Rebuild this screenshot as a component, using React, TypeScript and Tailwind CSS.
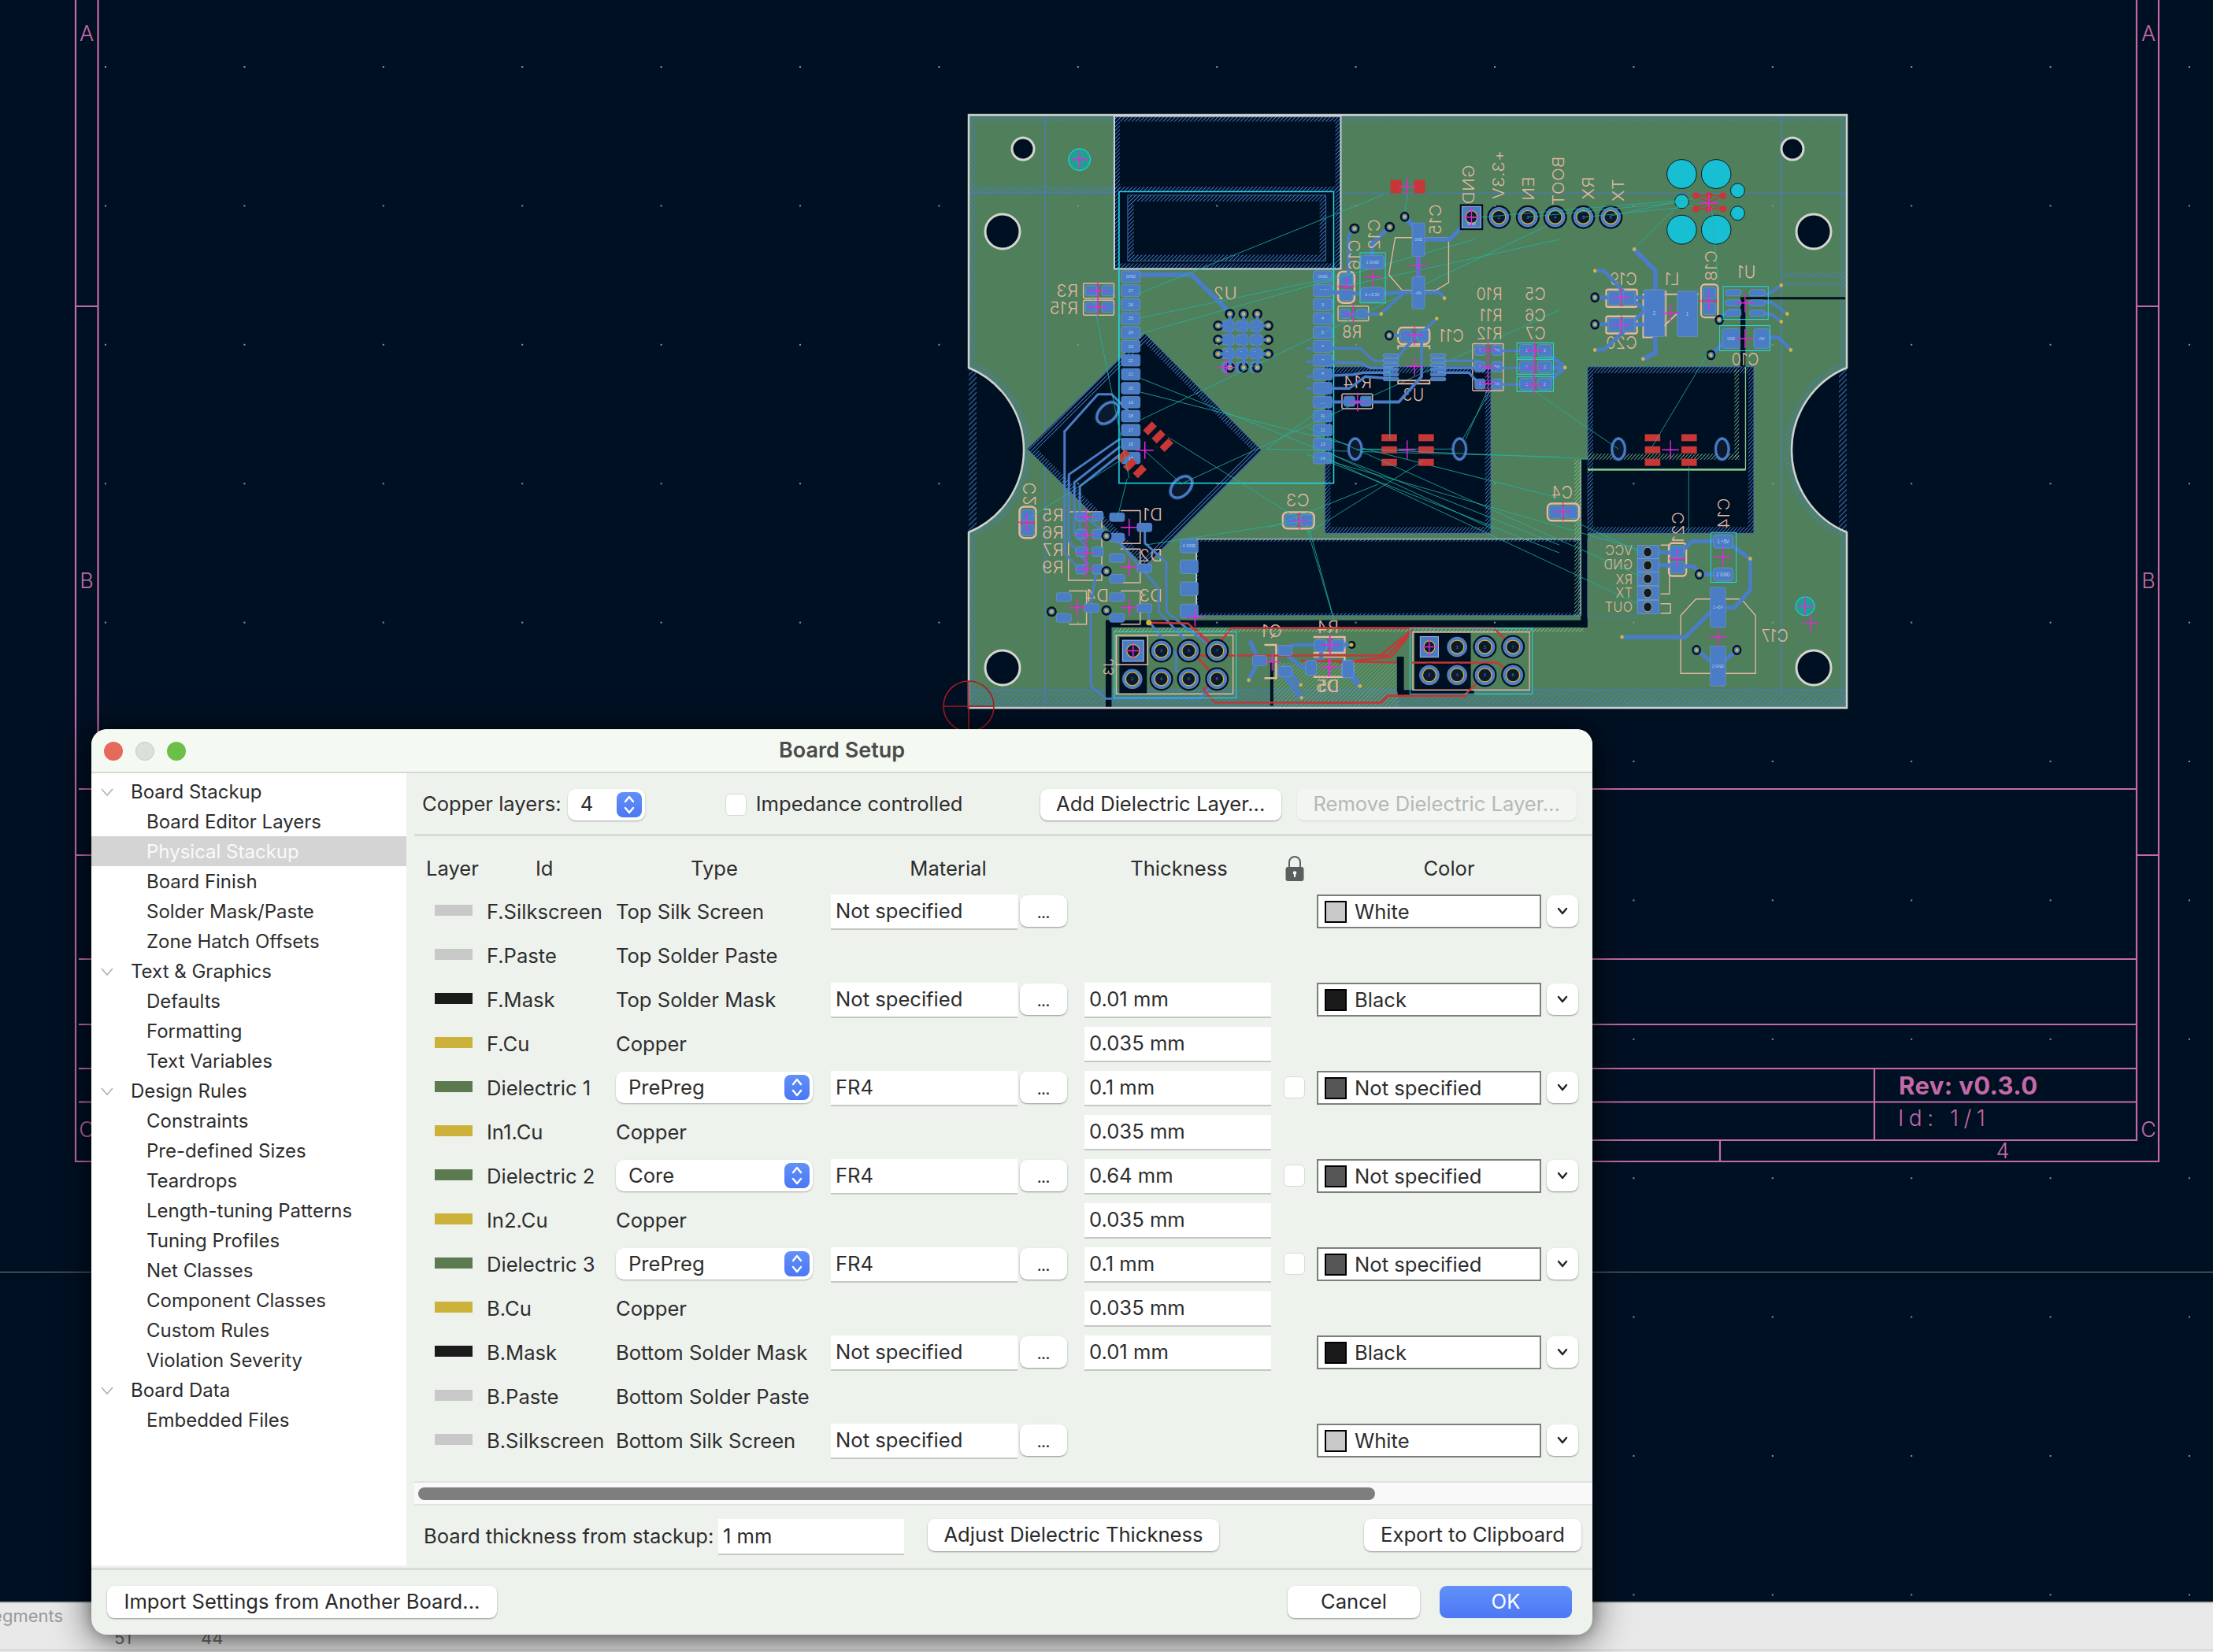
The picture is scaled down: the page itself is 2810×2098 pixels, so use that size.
import React from 'react';

const BLUE = '#4a7dc6';
const TEAL = '#22b5a6';
const SILK = '#e5b8a2';
const MAG = '#f020e0';
const CYAN = '#1fe0f0';
const DARK = '#001023';
const GREEN = '#4f7f5b';
const RED = '#c93636';
const PINK = '#c56aa6';

// two crops of the board were measured, each with its own scale
const Z1 = 'translate(1200 130) scale(0.4975 0.4975)';
const Z2 = 'translate(1660 130) scale(0.4464 0.4975)';

const Trace = ({ d, w = 8, c = BLUE }: { d: string; w?: number; c?: string }) => (
  <polyline points={d} fill="none" stroke={c} strokeWidth={w} strokeLinejoin="round" strokeLinecap="round" />
);

const Via = ({ x, y }: { x: number; y: number }) => (
  <g>
    <circle cx={x} cy={y} r={13} fill="#05101e" />
    <circle cx={x} cy={y} r={8} fill={BLUE} />
    <circle cx={x} cy={y} r={4.5} fill="#d8b430" />
  </g>
);

const Cross = ({ x, y, s = 22 }: { x: number; y: number; s?: number }) => (
  <path d={`M${x - s} ${y}H${x + s}M${x} ${y - s}V${y + s}`} stroke={MAG} strokeWidth={3} fill="none" />
);

const Pad = ({ x, y, w, h, t, r = 5, size = 10 }: { x: number; y: number; w: number; h: number; t?: string; r?: number; size?: number }) => (
  <g>
    <rect x={x} y={y} width={w} height={h} rx={r} fill={BLUE} stroke="#7ea6dd" strokeWidth={1} />
    {t && (
      <text x={x + w / 2} y={y + h / 2 + size * 0.35} fontSize={size} textAnchor="middle" fill="#bcd2ef" fontFamily="Liberation Sans, sans-serif">
        {t}
      </text>
    )}
  </g>
);

const Hole = ({ x, y, r = 25, t }: { x: number; y: number; r?: number; t?: string }) => (
  <g>
    <circle cx={x} cy={y} r={r + 5} fill="#06101e" />
    <circle cx={x} cy={y} r={r} fill={BLUE} stroke="#88aee0" strokeWidth={1} />
    <circle cx={x} cy={y} r={r * 0.68} fill="#0b1a2e" stroke="#d8b430" strokeWidth={2.5} />
    {t && (
      <text x={x} y={y + 4} fontSize={11} textAnchor="middle" fill={BLUE} fontFamily="Liberation Sans, sans-serif">
        {t}
      </text>
    )}
  </g>
);

const SquareHole = ({ x, y, s = 27, t }: { x: number; y: number; s?: number; t?: string }) => (
  <g>
    <rect x={x - s - 6} y={y - s - 6} width={2 * s + 12} height={2 * s + 12} fill="#06101e" />
    <rect x={x - s} y={y - s} width={2 * s} height={2 * s} fill={BLUE} stroke="#a8c4ea" strokeWidth={2} />
    <circle cx={x} cy={y} r={s * 0.6} fill="#0b1a2e" stroke="#d8b430" strokeWidth={2.5} />
    {t && (
      <text x={x} y={y + 20} fontSize={11} textAnchor="middle" fill="#bcd2ef" fontFamily="Liberation Sans, sans-serif">
        {t}
      </text>
    )}
  </g>
);

const Oval = ({ x, y, rx = 20, ry = 30, a = 0 }: { x: number; y: number; rx?: number; ry?: number; a?: number }) => (
  <g transform={`rotate(${a} ${x} ${y})`}>
    <ellipse cx={x} cy={y} rx={rx + 4} ry={ry + 4} fill="none" stroke={BLUE} strokeWidth={1.5} />
    <ellipse cx={x} cy={y} rx={rx} ry={ry} fill="#0b1a2e" stroke={BLUE} strokeWidth={6} />
  </g>
);

// back silk is mirrored, so the text starts on its right
const Silk = ({ x, y, t, size = 44 }: { x: number; y: number; t: string; size?: number }) => (
  <text transform={`translate(${x} ${y}) scale(-1 1)`} fontSize={size} fill={SILK} fontFamily="Inter, sans-serif" fontWeight={300} letterSpacing={1}>
    {t}
  </text>
);

const SilkV = ({ x, y, t, size = 44 }: { x: number; y: number; t: string; size?: number }) => (
  <text transform={`translate(${x} ${y}) rotate(90) scale(1 -1)`} fontSize={size} fill={SILK} fontFamily="Inter, sans-serif" fontWeight={300} letterSpacing={1}>
    {t}
  </text>
);

const Zone = ({ id, points, band = 24, hatch = 'hatch' }: { id: string; points: string; band?: number; hatch?: string }) => (
  <g>
    <clipPath id={id}>
      <polygon points={points} />
    </clipPath>
    <polygon points={points} fill={DARK} />
    <polygon points={points} fill="none" stroke={`url(#${hatch})`} strokeWidth={band * 2} clipPath={`url(#${id})`} />
    <polygon points={points} fill="none" stroke={BLUE} strokeWidth={1.5} />
  </g>
);

const Rats = ({ lines }: { lines: number[][] }) => (
  <g stroke={TEAL} strokeWidth={1.6}>
    {lines.map((l, i) => (
      <line key={i} x1={l[0]} y1={l[1]} x2={l[2]} y2={l[3]} />
    ))}
  </g>
);

const outline = 'M1230 146H2345V467A113 113 0 0 0 2345 676V899H1230V676A113 113 0 0 0 1230 467Z';

const BoardCrop1 = () => (
  <g transform={Z1}>
    {/* zones */}
    <Zone id="zTop" points="432,35 1010,35 1010,425 432,425" band={14} />
    <rect x={432} y={215} width={578} height={14} fill="url(#hatch)" />
    <Zone id="zAnt" points="466,237 972,237 972,405 466,405" band={16} />
    <rect x={432} y={35} width={578} height={390} fill="none" stroke="#c7d3e6" strokeWidth={4} />
    <Zone id="zDiamond" points="510,590 808,888 510,1186 210,885" band={18} />
    <Zone id="zLong" points="640,1115 1622,1115 1622,1310 640,1310" band={6} />
    <line x1={640} y1={1115} x2={1622} y2={1115} stroke="#d5e0d8" strokeWidth={2} />
    <rect x={640} y={1115} width={3} height={200} fill="#d5e0d8" />
    <rect x={410} y={1322} width={1228} height={18} fill={DARK} />
    <rect x={410} y={1322} width={15} height={223} fill={DARK} />
    <rect x={430} y={1342} width={1200} height={10} fill="url(#hatchG)" />
    <rect x={830} y={1430} width={8} height={110} fill={DARK} />
    <rect x={838} y={1430} width={320} height={115} fill="url(#hatchG)" opacity={0.55} />
    <rect x={1155} y={1415} width={16} height={100} fill={DARK} />
    <rect x={445} y={1365} width={70} height={145} fill={DARK} />
    <rect x={1200} y={1355} width={140} height={145} fill={DARK} />
    <rect x={1160} y={1500} width={190} height={12} fill={DARK} />

    {/* silk */}
    <g fill="none" stroke={SILK} strokeWidth={3}>
      <rect x={437} y={1360} width={298} height={150} />
      <rect x={437} y={1360} width={80} height={75} />
      <rect x={353} y={462} width={78} height={38} rx={4} />
      <rect x={353} y={505} width={78} height={38} rx={4} />
      <rect x={190} y={1032} width={42} height={80} rx={12} strokeWidth={5} />
      <rect x={862} y={1046} width={80} height={42} rx={12} strokeWidth={5} />
      <rect x={1003} y={432} width={42} height={80} rx={12} strokeWidth={5} />
      <rect x={1003} y={520} width={78} height={38} rx={4} />
      <rect x={1013} y={744} width={78} height={38} rx={4} />
      <path d="M315 1045h85v175h-85zM448 1042h50v84h-50M448 1140h50v86h-50M316 1247h45v85h-45M448 1247h50v85h-50" />
      <path d="M815 1385h30v85h-30M940 1365h80v40h-80M940 1415h80v52h-80" strokeWidth={5} />
    </g>
    <Silk x={340} y={497} t="R3" />
    <Silk x={340} y={540} t="R15" />
    <Silk x={745} y={503} t="U2" />
    <Silk x={303} y={1070} t="R5" />
    <Silk x={303} y={1114} t="R6" />
    <Silk x={303} y={1158} t="R7" />
    <Silk x={303} y={1202} t="R9" />
    <Silk x={555} y={1068} t="D1" />
    <Silk x={555} y={1172} t="D2" />
    <Silk x={555} y={1275} t="D3" />
    <Silk x={418} y={1275} t="D4" />
    <Silk x={930} y={1032} t="C3" />
    <Silk x={860} y={1365} t="Q1" />
    <Silk x={1005} y={1355} t="R4" />
    <Silk x={1005} y={1505} t="D5" />
    <Silk x={1090} y={730} t="R14" />
    <SilkV x={232} y={970} t="C2" />
    <SilkV x={430} y={1420} t="J3" size={36} />

    {/* tracks */}
    <Trace d="470,440 630,440 735,545" w={12} />
    <Trace d="1045,322 1030,340 1030,450" w={9} />
    <Trace d="1135,318 1090,360 1090,400" w={10} />
    <Trace d="305,840 390,745 425,745 470,790" w={6} />
    <Trace d="305,840 305,1150 345,1195" w={6} />
    <Trace d="445,860 316,950 316,1120 365,1180" w={6} />
    <Trace d="445,880 330,970 330,1100 365,1140" w={6} />
    <Trace d="445,900 344,980 344,1090 365,1105" w={6} />
    <Trace d="360,1060 450,1130 545,1240 545,1300 620,1380 620,1400" w={6} />
    <Trace d="510,1095 510,1125 565,1175 565,1300 620,1345 694,1400" w={6} />
    <Trace d="385,1200 372,1290 372,1490 410,1522 650,1522 694,1475" w={6} />
    <Trace d="520,1290 520,1325 590,1410 590,1450 622,1475" w={6} />
    <Trace d="1045,1385 890,1385 860,1400 915,1445 960,1420 960,1385" w={10} />
    <Trace d="780,1378 800,1425 775,1475" w={11} />
    <Trace d="868,1465 910,1520" w={13} />
    <Trace d="868,1440 905,1488" w={11} />
    <Trace d="1020,1445 1055,1490" w={11} />
    <Trace d="520,1328 620,1330 690,1395" w={5} c={RED} />
    <Trace d="640,1345 690,1395 730,1342 1180,1342 1240,1342" w={5} c={RED} />
    <Trace d="640,1412 1130,1412 1190,1350" w={5} c={RED} />
    <Trace d="640,1412 690,1468 660,1500 690,1532 1110,1532 1130,1515 1330,1515" w={5} c={RED} />
    <Trace d="910,1425 1160,1430" w={5} c={RED} />

    {/* pads */}
    {Array.from({ length: 14 }, (_, i) => (
      <Pad key={i} x={450} y={430 + i * 35.6} w={48} h={30} t={i === 0 ? 'GND' : String(28 - i)} size={11} />
    ))}
    {Array.from({ length: 14 }, (_, i) => (
      <Pad key={i} x={940} y={430 + i * 35.6} w={48} h={30} t={i === 0 ? 'GND' : i === 1 ? '+3.3V' : String(i + 1)} size={11} />
    ))}
    {[0, 1, 2].map((i) =>
      [0, 1, 2, 3].map((j) => (
        <Pad key={`${i}-${j}`} x={708 + i * 35.5} y={558 + j * 35} w={30} h={26} t="29" size={9} />
      ))
    )}
    {[[727, 540], [762, 540], [797, 540], [697, 570], [825, 570], [697, 606], [825, 606], [697, 642], [825, 642], [727, 677], [762, 677], [797, 677]].map(([x, y], i) => (
      <Via key={i} x={x} y={y} />
    ))}
    <Trace d="727,540 727,677" w={9} />
    <Trace d="762,540 762,677" w={9} />
    <Trace d="797,540 797,677" w={9} />
    <Trace d="697,570 825,570" w={9} />
    <Trace d="697,606 825,606" w={9} />
    <Trace d="697,642 825,642" w={9} />
    {[[727, 540], [762, 540], [797, 540], [697, 570], [825, 570], [697, 606], [825, 606], [697, 642], [825, 642], [727, 677], [762, 677], [797, 677]].map(([x, y], i) => (
      <circle key={i} cx={x} cy={y} r={4.5} fill="#d8b430" />
    ))}
    <Pad x={358} y={468} w={30} h={26} />
    <Pad x={400} y={468} w={30} h={26} />
    <Pad x={358} y={510} w={30} h={26} />
    <Pad x={400} y={510} w={30} h={26} />
    <Pad x={195} y={1040} w={32} h={28} />
    <Pad x={195} y={1078} w={32} h={28} />
    <Pad x={868} y={1052} w={30} h={30} />
    <Pad x={908} y={1052} w={30} h={30} />
    <Pad x={1007} y={438} w={34} h={28} />
    <Pad x={1007} y={478} w={34} h={28} />
    <Pad x={1007} y={528} w={28} h={24} />
    <Pad x={1050} y={528} w={28} h={24} />
    <Pad x={1018} y={750} w={28} h={26} />
    <Pad x={1060} y={750} w={28} h={26} />
    {[1045, 1090, 1135, 1180].map((y) => (
      <g key={y}>
        <Pad x={334} y={y} w={28} h={24} />
        <Pad x={376} y={y} w={28} h={24} />
      </g>
    ))}
    <Pad x={420} y={1048} w={38} h={22} />
    <Pad x={420} y={1100} w={38} h={22} />
    <Pad x={490} y={1074} w={38} h={22} />
    <Pad x={420} y={1152} w={38} h={22} />
    <Pad x={420} y={1205} w={38} h={22} />
    <Pad x={490} y={1178} w={38} h={22} />
    <Pad x={420} y={1252} w={38} h={22} />
    <Pad x={420} y={1305} w={38} h={22} />
    <Pad x={490} y={1280} w={38} h={22} />
    <Pad x={284} y={1252} w={38} h={22} />
    <Pad x={284} y={1305} w={38} h={22} />
    <Pad x={355} y={1280} w={38} h={22} />
    <Pad x={600} y={1115} w={46} h={35} t="4 GND" size={11} />
    <Pad x={600} y={1168} w={46} h={35} />
    <Pad x={600} y={1224} w={46} h={35} />
    <Pad x={600} y={1281} w={46} h={35} />
    <Pad x={850} y={1386} w={36} h={26} />
    <Pad x={850} y={1440} w={36} h={26} />
    <Pad x={785} y={1412} w={36} h={26} />
    <Pad x={920} y={1424} w={28} h={38} />
    <Pad x={1012} y={1424} w={32} h={44} />
    <Pad x={945} y={1372} w={30} h={26} />
    <Pad x={990} y={1372} w={30} h={26} />

    {[[478, 1472, '2'], [552, 1400, '3'], [552, 1472, '4'], [622, 1400, '5'], [622, 1472, '6'], [694, 1400, '7'], [694, 1472, '8']].map(([x, y, t]) => (
      <Hole key={String(t)} x={x as number} y={y as number} t={t as string} />
    ))}
    <SquareHole x={480} y={1400} />
    <Oval x={415} y={793} rx={21} ry={32} a={45} />
    <Oval x={603} y={982} rx={21} ry={32} a={45} />
    <circle cx={343} cy={146} r={28} fill="#22a08f" stroke={CYAN} strokeWidth={2} />

    {/* red paste */}
    <g fill={RED}>
      <rect x={1137} y={198} width={28} height={34} />
      <rect x={1197} y={198} width={28} height={34} />
      {[[523, 832], [545, 853], [565, 875], [455, 903], [472, 925], [497, 942]].map(([x, y]) => (
        <rect key={x} x={x - 16} y={y - 9} width={32} height={18} transform={`rotate(-45 ${x} ${y})`} />
      ))}
    </g>

    {/* vias */}
    {[[1045, 322], [1135, 318], [412, 1107], [412, 1197], [272, 1300], [412, 1297]].map(([x, y], i) => (
      <Via key={i} x={x} y={y} />
    ))}
    <circle cx={520} cy={1328} r={7} fill="#d8b430" />
    <circle cx={1038} cy={1385} r={10} fill="#06101e" />
    <circle cx={1038} cy={1385} r={4.5} fill="#d8b430" />
    <circle cx={775} cy={1475} r={4.5} fill="#d8b430" />
    <circle cx={908} cy={1487} r={4.5} fill="#d8b430" />
    <circle cx={910} cy={1520} r={4.5} fill="#d8b430" />
    <circle cx={1056} cy={1488} r={4.5} fill="#d8b430" />

    {/* courtyards */}
    <g fill="none" stroke={CYAN} strokeWidth={2}>
      <rect x={444} y={228} width={548} height={744} strokeWidth={3} />
      <rect x={432} y={1352} width={311} height={168} />
    </g>

    {/* ratsnest */}
    <Rats
      lines={[
        [500, 550, 1000, 445], [500, 590, 1350, 350], [490, 490, 1120, 235], [1180, 235, 1172, 290], [375, 490, 470, 960], [465, 960, 440, 1060],
        [500, 705, 1568, 1130], [500, 740, 1568, 1010], [820, 885, 1568, 905], [510, 890, 605, 975], [600, 975, 1568, 530], [200, 1070, 470, 900],
        [985, 920, 1568, 1150], [990, 900, 1400, 1090], [570, 855, 905, 1065], [930, 1090, 990, 1310], [940, 1065, 510, 1130], [1020, 470, 1568, 350],
        [1135, 660, 1135, 860], [1315, 870, 1390, 740], [1050, 885, 1310, 885], [1105, 975, 830, 1085], [985, 765, 820, 885], [500, 810, 1568, 300],
      ]}
    />

    {/* anchors */}
    {[[343, 146], [390, 480], [390, 522], [1024, 470], [1042, 541], [510, 888], [360, 1060], [360, 1105], [360, 1150], [360, 1190], [470, 1085], [470, 1186], [338, 1290], [470, 1290], [208, 1072], [905, 1068], [718, 677], [480, 1400], [835, 1428], [982, 1385], [982, 1442], [638, 1315], [1236, 1390]].map(([x, y], i) => (
      <Cross key={i} x={x} y={y} />
    ))}
    <Cross x={1180} y={215} />
  </g>
);

// these dark pours lie under everything from the first crop
const ZonesCrop2 = () => (
  <g transform={Z2}>
    <Zone id="zMid" points="50,675 522,675 522,1100 50,1100" band={16} />
    <Zone id="zRight" points="797,675 1270,675 1270,1100 797,1100" band={16} />
    <rect x={1215} y={680} width={13} height={232} fill="url(#hatchG)" />
    <rect x={797} y={897} width={431} height={15} fill="url(#hatchG)" />
    <rect x={797} y={935} width={450} height={5} fill="#8fd08f" />
    <rect x={1245} y={675} width={3} height={262} fill="#8fd08f" />
    <rect x={1240} y={497} width={290} height={6} fill={DARK} />
    <rect x={1232} y={497} width={14} height={178} fill={DARK} />
  </g>
);

const BoardCrop2 = () => (
  <g transform={Z2}>
    <rect x={778} y={912} width={19} height={428} fill={DARK} />
    <rect x={760} y={912} width={18} height={400} fill="url(#hatchG)" />
    <line x1={778} y1={912} x2={778} y2={1310} stroke="#b8dcc0" strokeWidth={2} />
    <rect x={255} y={1415} width={15} height={90} fill={DARK} />
    <rect x={305} y={1355} width={160} height={145} fill={DARK} />
    <rect x={797} y={1115} width={140} height={200} fill="none" stroke={BLUE} strokeWidth={1.5} />

    {/* silk */}
    <g fill="none" stroke={SILK} strokeWidth={3}>
      <polygon points="250,345 402,345 402,460 365,480 270,480 232,440" />
      <polygon points="1105,1268 1235,1268 1275,1310 1275,1458 1062,1458 1062,1310" />
      <rect x={300} y={1352} width={332} height={148} />
      <path d="M1110 490h-130l-25 0v110h25zM1020 480v118" strokeWidth={4} />
      <rect x={850} y={478} width={88} height={44} rx={5} strokeWidth={5} />
      <rect x={850} y={546} width={88} height={44} rx={5} strokeWidth={5} />
      <rect x={1120} y={465} width={48} height={84} rx={10} strokeWidth={5} />
      <rect x={258} y={575} width={90} height={42} rx={12} strokeWidth={5} />
      <path d="M258 630v-8h90v8M258 710h90v8h-90z" strokeWidth={4} />
      <rect x={470} y={616} width={88} height={120} rx={3} />
      <rect x={683} y={1024} width={90} height={44} rx={12} strokeWidth={5} />
      <rect x={1028} y={1125} width={50} height={84} rx={10} strokeWidth={5} />
      <path d="M1005 1130h25v125h-25M1005 1280h28v24h-28" />
    </g>
    <Silk x={555} y={505} t="R10" />
    <Silk x={555} y={558} t="R11" />
    <Silk x={555} y={605} t="R12" />
    <Silk x={678} y={505} t="C5" />
    <Silk x={678} y={558} t="C6" />
    <Silk x={678} y={605} t="C7" />
    <Silk x={445} y={612} t="C11" />
    <Silk x={332} y={762} t="U3" />
    <Silk x={155} y={600} t="R8" />
    <Silk x={938} y={466} t="C19" />
    <Silk x={938} y={630} t="C20" />
    <Silk x={1058} y={466} t="L1" />
    <Silk x={1275} y={448} t="U1" />
    <Silk x={1285} y={672} t="C10" />
    <Silk x={755} y={1012} t="C4" />
    <Silk x={1368} y={1376} t="C17" />
    <Silk x={90} y={1505} t="D5" />
    <Silk x={925} y={1156} t="VCC" size={36} />
    <Silk x={925} y={1192} t="GND" size={36} />
    <Silk x={925} y={1230} t="RX" size={36} />
    <Silk x={925} y={1265} t="TX" size={36} />
    <Silk x={925} y={1300} t="OUT" size={36} />
    <SilkV x={475} y={160} t="GND" />
    <SilkV x={560} y={122} t="+3.3V" />
    <SilkV x={645} y={190} t="EN" />
    <SilkV x={730} y={138} t="BOOT" />
    <SilkV x={815} y={190} t="RX" />
    <SilkV x={900} y={195} t="TX" />
    <SilkV x={380} y={260} t="C15" />
    <SilkV x={205} y={298} t="C12" />
    <SilkV x={150} y={350} t="C16" />
    <SilkV x={1165} y={378} t="C18" />
    <SilkV x={1200} y={1010} t="C14" />
    <SilkV x={1070} y={1045} t="C21" />

    {/* tracks */}
    <Trace d="277,292 316,330 316,500" w={14} />
    <Trace d="316,350 405,350 467,293" w={12} />
    <Trace d="20,482 180,490 270,485 375,485 390,500" w={10} />
    <Trace d="130,542 210,540 270,490" w={8} />
    <Trace d="233,595 340,595" w={8} />
    <Trace d="368,552 280,625 235,680" w={8} />
    <Trace d="0,628 150,628 190,660 235,660" w={7} />
    <Trace d="0,662 150,665 180,678 235,678" w={7} />
    <Trace d="0,700 130,695 160,690 235,690" w={7} />
    <Trace d="0,730 120,730 165,700 235,705" w={7} />
    <Trace d="15,765 260,765 325,700 325,600" w={8} />
    <Trace d="372,660 490,660" w={7} />
    <Trace d="372,678 520,678" w={7} />
    <Trace d="372,690 460,690 490,720" w={7} />
    <Trace d="555,634 620,634" w={6} />
    <Trace d="555,678 620,678" w={6} />
    <Trace d="555,720 620,720" w={6} />
    <Trace d="675,634 733,677 675,720" w={11} />
    <Trace d="675,678 733,677" w={11} />
    <Trace d="930,375 990,430 990,640 955,655" w={13} />
    <Trace d="818,430 845,430 895,480 960,530 895,590 845,630 818,632" w={10} />
    <Trace d="818,498 960,498" w={10} />
    <Trace d="818,567 960,567" w={10} />
    <Trace d="1348,467 1310,490 1260,490" w={8} />
    <Trace d="1365,540 1320,510 1280,510" w={8} />
    <Trace d="1348,560 1320,540 1280,540" w={8} />
    <Trace d="1172,555 1200,530 1230,530" w={8} />
    <Trace d="1148,645 1200,600" w={10} />
    <Trace d="1375,632 1340,600 1300,600" w={10} />
    <Trace d="970,1148 1060,1150 1095,1120 1190,1120 1260,1165 1260,1245 1215,1290 1170,1290" w={11} />
    <Trace d="970,1180 1100,1185 1120,1205 1180,1205" w={11} />
    <Trace d="895,1365 1075,1365 1160,1290" w={11} />
    <Trace d="1107,1398 1168,1440 1222,1398" w={11} />
    <Trace d="0,1385 100,1385 125,1385" w={9} />
    <Trace d="110,1430 150,1490" w={11} />
    <Trace d="-5,1342 150,1342 530,1342 585,1390" w={5} c={RED} />
    <Trace d="215,1530 230,1515 445,1515 505,1462" w={5} c={RED} />
    <Trace d="210,1410 300,1345" w={5} c={RED} />
    <Trace d="300,1430 540,1430 585,1462" w={5} c={RED} />
    <Trace d="90,1430 240,1415 290,1360" w={5} c={RED} />
    <Trace d="0,1532 210,1532" w={5} c={RED} />

    {/* pads */}
    <Pad x={298} y={308} w={36} h={85} r={3} t="GND" size={10} />
    <Pad x={298} y={445} w={36} h={82} r={3} t="+5V" size={10} />
    <Pad x={152} y={390} w={66} h={36} r={8} t="1 GND" size={12} />
    <Pad x={152} y={472} w={66} h={36} r={8} t="2 +3.3V" size={12} />
    <Pad x={265} y={581} w={32} h={30} />
    <Pad x={312} y={581} w={32} h={30} />
    {[642, 654, 666, 678, 690, 702].map((y) => (
      <g key={y}>
        <rect x={216} y={y} width={44} height={9} rx={4} fill={BLUE} stroke="#8ab0e4" strokeWidth={1} />
        <rect x={350} y={y} width={44} height={9} rx={4} fill={BLUE} stroke="#8ab0e4" strokeWidth={1} />
      </g>
    ))}
    {[620, 662, 706].map((y) => (
      <g key={y}>
        <Pad x={476} y={y} w={30} h={26} t="1" size={9} />
        <Pad x={525} y={y} w={30} h={26} t="Key" size={9} />
      </g>
    ))}
    {[618, 660, 704].map((y) => (
      <g key={y}>
        <Pad x={604} y={y} w={40} h={30} t="1" size={11} />
        <Pad x={655} y={y} w={40} h={30} t="2" size={11} />
        <rect x={596} y={y - 4} width={104} height={38} fill="none" stroke={CYAN} strokeWidth={2} />
      </g>
    ))}
    <Pad x={958} y={478} w={58} h={120} r={3} t="2" size={14} />
    <Pad x={1052} y={482} w={58} h={116} r={3} t="1" size={14} />
    <Pad x={856} y={483} w={34} h={34} />
    <Pad x={898} y={483} w={34} h={34} />
    <Pad x={856} y={551} w={34} h={34} />
    <Pad x={898} y={551} w={34} h={34} />
    <Pad x={1126} y={472} w={36} h={30} />
    <Pad x={1126} y={512} w={36} h={30} />
    <Pad x={1190} y={478} w={44} h={16} />
    <Pad x={1190} y={504} w={44} h={16} />
    <Pad x={1190} y={530} w={44} h={16} />
    <Pad x={1258} y={478} w={44} h={16} />
    <Pad x={1258} y={504} w={44} h={16} />
    <Pad x={1258} y={530} w={44} h={16} />
    <Pad x={1180} y={578} w={50} h={50} r={6} t="GND" size={10} />
    <Pad x={1270} y={578} w={44} h={50} r={6} t="+5V" size={10} />
    <Pad x={688} y={1030} w={36} h={32} />
    <Pad x={732} y={1030} w={36} h={32} />
    <Pad x={1032} y={1132} w={40} h={30} />
    <Pad x={1032} y={1172} w={40} h={30} />
    <Pad x={1155} y={1104} w={56} h={34} r={8} t="1 +5V" size={13} />
    <Pad x={1155} y={1188} w={56} h={34} r={8} t="2 GND" size={13} />
    <Pad x={1146} y={1238} w={44} h={102} r={3} t="1 +5V" size={11} />
    <Pad x={1146} y={1388} w={44} h={102} r={3} t="2 GND" size={11} />
    <Pad x={20} y={1372} w={34} h={30} />
    <Pad x={70} y={1372} w={34} h={30} />
    <Pad x={100} y={1425} w={32} h={44} />

    {[1148, 1182, 1216, 1252, 1288].map((y) => (
      <g key={y}>
        <rect x={940} y={y - 17} width={60} height={34} fill={BLUE} stroke="#88aee0" strokeWidth={1} />
        <circle cx={968} cy={y} r={12} fill="#0b1a2e" stroke="#d8b430" strokeWidth={2} />
      </g>
    ))}

    <SquareHole x={467} y={293} s={27} t="GND" />
    {[[545, 293, '2'], [627, 293, '3'], [705, 293, '4'], [785, 293, '5'], [863, 293, '6'], [426, 1390, '3'], [505, 1390, '5'], [585, 1390, '7'], [347, 1462, '2'], [426, 1462, '4'], [505, 1462, '6'], [585, 1462, '8']].map(([x, y, t], i) => (
      <g key={i} transform={`translate(${x} ${y}) scale(1.12 1) translate(${-(x as number)} ${-(y as number)})`}>
        <Hole x={x as number} y={y as number} t={t as string} />
      </g>
    ))}
    <SquareHole x={347} y={1390} s={26} />
    {[[136, 885], [433, 885], [885, 885], [1180, 885]].map(([x, y]) => (
      <Oval key={x} x={x} y={y} rx={18} ry={26} />
    ))}
    {[[1065, 183, 42, 37], [1163, 183, 42, 37], [1065, 325, 42, 37], [1163, 325, 42, 37], [1065, 253, 20, 18], [1224, 225, 20, 18], [1224, 283, 20, 18]].map(([x, y, rx, ry]) => (
      <ellipse key={`${x}${y}`} cx={x} cy={y} rx={rx} ry={ry} fill="#18bfd2" stroke="#06101e" strokeWidth={2} />
    ))}
    <ellipse cx={1416} cy={1286} rx={27} ry={24} fill="#22a08f" stroke={CYAN} strokeWidth={2} />

    {/* red paste */}
    <g fill={RED}>
      {[847, 878, 910].map((y) => (
        <g key={y}>
          <rect x={211} y={y} width={44} height={18} />
          <rect x={316} y={y} width={44} height={18} />
          <rect x={960} y={y} width={44} height={18} />
          <rect x={1064} y={y} width={44} height={18} />
        </g>
      ))}
    </g>
    <g fill="none" stroke={RED} strokeWidth={3}>
      <path d="M1105 238L1180 272M1105 272L1180 238M1105 238H1180M1105 272H1180" />
    </g>
    {[[1105, 238], [1142, 238], [1183, 238], [1105, 272], [1142, 272], [1183, 272]].map(([x, y]) => (
      <rect key={`${x}${y}`} x={x - 9} y={y - 8} width={18} height={16} rx={5} fill={RED} />
    ))}

    {/* vias */}
    {[[277, 292], [233, 595], [818, 498], [818, 567], [1148, 645], [1172, 555], [1107, 1398], [1222, 1398], [1115, 1205]].map(([x, y], i) => (
      <Via key={i} x={x} y={y} />
    ))}
    {[[390, 500], [210, 540], [368, 552], [733, 677], [930, 375], [818, 430], [818, 632], [955, 655], [1348, 467], [1365, 540], [1348, 560], [1375, 632], [1260, 1165], [895, 1365], [125, 1385], [150, 1490]].map(([x, y], i) => (
      <circle key={i} cx={x} cy={y} r={5} fill="#d8b430" />
    ))}

    {/* courtyards */}
    <g fill="none" stroke={CYAN} strokeWidth={2}>
      <rect x={150} y={384} width={72} height={128} />
      <rect x={292} y={1343} width={348} height={167} />
      <rect x={1148} y={1098} width={72} height={127} />
      <rect x={1183} y={470} width={128} height={84} />
      <rect x={1173} y={570} width={143} height={64} />
    </g>

    <Rats
      lines={[
        [470, 295, 1060, 250], [627, 293, 1060, 255], [785, 293, 1100, 265], [860, 290, 1100, 245], [930, 372, 1065, 255], [1150, 270, 1170, 470],
        [650, 740, 885, 885], [1085, 930, 1085, 1100], [1140, 640, 980, 880], [140, 885, 800, 910], [0, 900, 940, 1140], [60, 910, 940, 1280],
        [0, 830, 950, 1210], [0, 1090, 75, 1320], [450, 860, 510, 740], [760, 1070, 950, 1150], [235, 680, 235, 860], [0, 1100, 330, 915],
      ]}
    />

    {[[186, 446], [316, 417], [305, 595], [305, 674], [143, 765], [514, 632], [514, 677], [514, 718], [648, 634], [645, 678], [645, 720], [284, 887], [1033, 887], [893, 498], [893, 567], [1033, 538], [1142, 507], [1245, 512], [1245, 603], [1142, 258], [727, 1045], [1052, 1165], [1183, 1160], [1168, 1365], [1416, 1286], [1432, 1330], [347, 1390], [467, 293], [65, 1385], [62, 1442]].map(([x, y], i) => (
      <Cross key={i} x={x} y={y} s={24} />
    ))}
  </g>
);

const Board = () => (
  <g>
    <path d={outline} fill={GREEN} />
    <clipPath id="boardClip">
      <path d={outline} />
    </clipPath>
    {/* keepout areas in the notches */}
    <path d="M1230 467A113 113 0 0 1 1230 676Z" fill={DARK} />
    <path d="M2345 467A113 113 0 0 0 2345 676Z" fill={DARK} />
    <rect x={1230} y={467} width={10} height={209} fill="url(#hatchR)" />
    <rect x={2335} y={467} width={10} height={209} fill="url(#hatchR)" />
    {/* hatched border */}
    <path d={outline} fill="none" stroke="url(#hatchR)" strokeWidth={18} clipPath="url(#boardClip)" />
    <rect x={1230} y={236} width={430} height={10} fill="url(#hatchR)" />
    <rect x={1230} y={876} width={1115} height={23} fill="url(#hatchR)" />
    <rect x={2262} y={345} width={83} height={8} fill="url(#hatchR)" />
    <rect x={2262} y={358} width={83} height={6} fill="url(#hatchR)" />
    <g stroke={BLUE} strokeWidth={1.2} fill="none">
      <line x1={1327} y1={146} x2={1327} y2={899} />
      <line x1={2262} y1={146} x2={2262} y2={880} />
      <line x1={1230} y1={245} x2={2345} y2={245} />
      <line x1={1230} y1={876} x2={2345} y2={876} />
    </g>
    <ZonesCrop2 />
    <BoardCrop1 />
    <BoardCrop2 />
    {/* board edge and mounting holes */}
    <path d={outline} fill="none" stroke="#cfd3cc" strokeWidth={2.5} />
    {[[1299, 189, 14], [1273, 294, 22], [1273, 848, 22], [2276, 189, 14], [2303, 294, 22], [2303, 848, 22]].map(([x, y, r]) => (
      <circle key={`${x}${y}`} cx={x} cy={y} r={r} fill={DARK} stroke="#d4d6cf" strokeWidth={3} />
    ))}
    {/* origin target */}
    <circle cx={1230} cy={897} r={32} fill="none" stroke="#b01820" strokeWidth={1.5} />
    <path d="M1198 897H1262M1230 865V929" stroke="#b01820" strokeWidth={1.5} />
  </g>
);

const Sheet = () => (
  <g>
    <g stroke={PINK} strokeWidth={2.2} fill="none">
      <path d="M96 0V1475H2741V0" />
      <path d="M124.500 0V1448H2713V0" />
      <path d="M96 389H124.500M96 1086H124.500M2713 389H2741M2713 1086H2741" />
      <path d="M100 1002H2713M100 1218H2713M100 1301H2713M100 1357H2713M100 1399.500H2713" />
      <path d="M2380 1357V1448M2184 1448V1475" />
    </g>
    <g fill={PINK} fontFamily="Inter, sans-serif" fontWeight={300}>
      <text x={110} y={52} fontSize={27} textAnchor="middle">A</text>
      <text x={110} y={747} fontSize={27} textAnchor="middle">B</text>
      <text x={110} y={1444} fontSize={27} textAnchor="middle">C</text>
      <text x={2728} y={52} fontSize={27} textAnchor="middle">A</text>
      <text x={2728} y={747} fontSize={27} textAnchor="middle">B</text>
      <text x={2728} y={1444} fontSize={27} textAnchor="middle">C</text>
      <text x={2543} y={1471} fontSize={27} textAnchor="middle">4</text>
      <text x={2411} y={1390} fontSize={31} fontWeight={700} letterSpacing={0.4}>Rev: v0.3.0</text>
      <text x={2410} y={1430} fontSize={28} letterSpacing={6.5}>Id: 1/1</text>
    </g>
  </g>
);

const Canvas = () => (
  <svg width={2810} height={2034} viewBox="0 0 2810 2034" className="block">
    <defs>
      <pattern id="hatch" width={7} height={7} patternUnits="userSpaceOnUse" patternTransform="rotate(45)">
        <line x1={0} y1={0} x2={0} y2={7} stroke={BLUE} strokeWidth={3.500} />
      </pattern>
      <pattern id="hatchR" width={4.500} height={4.500} patternUnits="userSpaceOnUse" patternTransform="rotate(45)">
        <line x1={0} y1={0} x2={0} y2={4.500} stroke={BLUE} strokeWidth={2.400} strokeOpacity={0.8} />
      </pattern>
      <pattern id="hatchG" width={7} height={7} patternUnits="userSpaceOnUse" patternTransform="rotate(45)">
        <line x1={0} y1={0} x2={0} y2={7} stroke="#8fd08f" strokeWidth={3} />
      </pattern>
      <pattern id="grid" x={133} y={84} width={176.400} height={176.400} patternUnits="userSpaceOnUse">
        <rect width={2} height={2} fill="#8a9099" />
      </pattern>
    </defs>
    <rect width={2810} height={2034} fill={DARK} />
    <line x1={0} y1={1615.500} x2={2810} y2={1615.500} stroke="#77828c" strokeWidth={1} />
    <Sheet />
    <Board />
    <rect width={2810} height={2034} fill="url(#grid)" />
  </svg>
);

const treeItems: { label: string; top?: boolean; active?: boolean }[] = [
  { label: 'Board Stackup', top: true },
  { label: 'Board Editor Layers' },
  { label: 'Physical Stackup', active: true },
  { label: 'Board Finish' },
  { label: 'Solder Mask/Paste' },
  { label: 'Zone Hatch Offsets' },
  { label: 'Text & Graphics', top: true },
  { label: 'Defaults' },
  { label: 'Formatting' },
  { label: 'Text Variables' },
  { label: 'Design Rules', top: true },
  { label: 'Constraints' },
  { label: 'Pre-defined Sizes' },
  { label: 'Teardrops' },
  { label: 'Length-tuning Patterns' },
  { label: 'Tuning Profiles' },
  { label: 'Net Classes' },
  { label: 'Component Classes' },
  { label: 'Custom Rules' },
  { label: 'Violation Severity' },
  { label: 'Board Data', top: true },
  { label: 'Embedded Files' },
];

type Layer = {
  swatch: string;
  id: string;
  type: string;
  select?: boolean;
  material?: string;
  thickness?: string;
  lock?: boolean;
  color?: string;
  colorSwatch?: string;
};

const WHITE = '#c8c8c8';
const BLACK = '#1a1a1a';
const CU = '#ccb23a';
const DIEL = '#5b7a4f';
const NOTSPEC = '#565656';

const layers: Layer[] = [
  { swatch: WHITE, id: 'F.Silkscreen', type: 'Top Silk Screen', material: 'Not specified', color: 'White', colorSwatch: WHITE },
  { swatch: WHITE, id: 'F.Paste', type: 'Top Solder Paste' },
  { swatch: BLACK, id: 'F.Mask', type: 'Top Solder Mask', material: 'Not specified', thickness: '0.01 mm', color: 'Black', colorSwatch: BLACK },
  { swatch: CU, id: 'F.Cu', type: 'Copper', thickness: '0.035 mm' },
  { swatch: DIEL, id: 'Dielectric 1', type: 'PrePreg', select: true, material: 'FR4', thickness: '0.1 mm', lock: true, color: 'Not specified', colorSwatch: NOTSPEC },
  { swatch: CU, id: 'In1.Cu', type: 'Copper', thickness: '0.035 mm' },
  { swatch: DIEL, id: 'Dielectric 2', type: 'Core', select: true, material: 'FR4', thickness: '0.64 mm', lock: true, color: 'Not specified', colorSwatch: NOTSPEC },
  { swatch: CU, id: 'In2.Cu', type: 'Copper', thickness: '0.035 mm' },
  { swatch: DIEL, id: 'Dielectric 3', type: 'PrePreg', select: true, material: 'FR4', thickness: '0.1 mm', lock: true, color: 'Not specified', colorSwatch: NOTSPEC },
  { swatch: CU, id: 'B.Cu', type: 'Copper', thickness: '0.035 mm' },
  { swatch: BLACK, id: 'B.Mask', type: 'Bottom Solder Mask', material: 'Not specified', thickness: '0.01 mm', color: 'Black', colorSwatch: BLACK },
  { swatch: WHITE, id: 'B.Paste', type: 'Bottom Solder Paste' },
  { swatch: WHITE, id: 'B.Silkscreen', type: 'Bottom Silk Screen', material: 'Not specified', color: 'White', colorSwatch: WHITE },
];

const Stepper = ({ className }: { className: string }) => (
  <span className={`flex items-center justify-center rounded-[8px] bg-gradient-to-b from-[#6190f7] to-[#4c77f5] ${className}`}>
    <svg width={14} height={26} viewBox="0 0 14 26" fill="none" stroke="white" strokeWidth={2.4} strokeLinecap="round" strokeLinejoin="round">
      <path d="M2 9L7 3L12 9M2 17L7 23L12 17" />
    </svg>
  </span>
);

const btnBase = 'flex items-center justify-center rounded-[9px] bg-white shadow-[0_1px_2px_rgba(0,0,0,0.4)] text-[#2a2a2a]';

const fieldBase = 'flex h-[43px] items-center bg-white pl-[6px] shadow-[0_2px_0_#c6c7c4]';

const LockIcon = () => (
  <svg width={24} height={32} viewBox="0 0 24 32">
    <path d="M5 15V8a7 7 0 0 1 14 0v7" fill="none" stroke="#5a5f5e" strokeWidth={2} />
    <rect x={0.5} y={14} width={23} height={18} rx={3} fill="#5a5f5e" />
    <circle cx={12} cy={21.500} r={2.200} fill="white" />
    <rect x={11} y={22} width={2} height={5} fill="white" />
  </svg>
);

const Row = ({ l }: { l: Layer }) => (
  <div className="flex h-[56px] items-center">
    <div className="w-[84px] pl-[36px]">
      <div className="mb-[2px] h-[14px] w-[48px]" style={{ backgroundColor: l.swatch }} />
    </div>
    <div className="w-[182px] whitespace-nowrap pl-[18px] pt-[3px]">{l.id}</div>
    <div className="w-[273px] whitespace-nowrap">
      {l.select ? (
        <div className="flex h-[40px] w-[250px] items-center justify-between rounded-[10px] bg-white pl-[16px] pr-[4px] shadow-[0_1px_2px_rgba(0,0,0,0.3)]">
          <span>{l.type}</span>
          <Stepper className="h-[32px] w-[32px]" />
        </div>
      ) : (
        <div className="pt-[3px]">{l.type}</div>
      )}
    </div>
    <div className="flex w-[322px] items-center gap-[3px]">
      {l.material && (
        <>
          <div className={`${fieldBase} w-[237px]`}>{l.material}</div>
          <button className={`${btnBase} h-[40px] w-[60px] pt-[6px] text-[16px] font-bold`}>...</button>
        </>
      )}
    </div>
    <div className="w-[253px]">{l.thickness && <div className={`${fieldBase} w-[237px]`}>{l.thickness}</div>}</div>
    <div className="w-[42px]">{l.lock && <div className="h-[28px] w-[27px] rounded-[6px] border border-[#d8d8d8] bg-white" />}</div>
    {l.color && (
      <div className="flex items-center gap-[7px]">
        <div className="mt-[1px] flex h-[43px] w-[285px] items-center gap-[10px] border-[2px] border-[#7d7d7d] bg-white pl-[8px]">
          <span className="h-[28px] w-[28px] border-[2px] border-black" style={{ backgroundColor: l.colorSwatch }} />
          <span className="pt-[2px]">{l.color}</span>
        </div>
        <button className={`${btnBase} h-[40px] w-[40px]`}>
          <svg width={14} height={10} viewBox="0 0 14 10" fill="none" stroke="#222" strokeWidth={2.4} strokeLinecap="round" strokeLinejoin="round">
            <path d="M2 2L7 8L12 2" />
          </svg>
        </button>
      </div>
    )}
  </div>
);

const BoardSetup = () => (
  <div className="absolute left-[116px] top-[926px] flex h-[1150px] w-[1906px] flex-col overflow-hidden rounded-[20px] bg-[#eef2ed] text-[25.6px] text-[#2d2d2d] shadow-[0_8px_50px_rgba(0,0,0,0.62),0_0_16px_rgba(0,0,0,0.25)] [font-family:Inter,'Liberation_Sans',sans-serif]">
    <div className="relative flex h-[56px] shrink-0 items-center justify-center border-b-[2px] border-[#d5d8d3] bg-[#f4f9f2]">
      <div className="absolute left-[16px] top-[16px] flex gap-[16px]">
        <span className="h-[24px] w-[24px] rounded-full bg-[#e46a5b]" />
        <span className="h-[24px] w-[24px] rounded-full border border-[#c5c9c3] bg-[#dbe0da]" />
        <span className="h-[24px] w-[24px] rounded-full bg-[#6cc04a]" />
      </div>
      <span className="text-[27px] font-semibold text-[#4b4b4b]">Board Setup</span>
    </div>
    <div className="flex min-h-0 flex-1">
      <div className="h-[1006px] w-[400px] shrink-0 bg-white pt-[4px] text-[24px]">
        {treeItems.map((t) => (
          <div key={t.label} className={`flex h-[38px] items-center pt-[2px] ${t.active ? 'bg-[#d4d4d4] text-[#fafafa]' : ''} ${t.top ? 'pl-[12px]' : 'pl-[70px]'}`}>
            {t.top && (
              <svg width={16} height={10} viewBox="0 0 16 10" fill="none" stroke="#b3b6b2" strokeWidth={1.8} className="mr-[22px]">
                <path d="M1 1L8 9L15 1" />
              </svg>
            )}
            {t.label}
          </div>
        ))}
      </div>
      <div className="flex min-w-0 flex-1 flex-col pl-[10px]">
        <div className="flex h-[80px] shrink-0 items-center border-b-[3px] border-[#d8dbd7] pl-[10px] pt-[2px]">
          <span className="whitespace-nowrap">Copper layers:</span>
          <div className="ml-[8px] flex h-[40px] w-[98px] shrink-0 items-center justify-between rounded-[10px] bg-white pl-[16px] pr-[4px] shadow-[0_1px_2px_rgba(0,0,0,0.3)]">
            <span>4</span>
            <Stepper className="h-[32px] w-[32px]" />
          </div>
          <div className="ml-[102px] h-[28px] w-[27px] shrink-0 rounded-[6px] border border-[#d8d8d8] bg-white" />
          <span className="ml-[12px] w-[263px] shrink-0 whitespace-nowrap">Impedance controlled</span>
          <button className={`${btnBase} ml-[98px] h-[40px] w-[306px] shrink-0`}>Add Dielectric Layer...</button>
          <button className="ml-[20px] flex h-[40px] w-[355px] shrink-0 items-center justify-center rounded-[9px] bg-[#f2f5f1] text-[#b5b8b4] shadow-[0_1px_2px_rgba(0,0,0,0.12)]">Remove Dielectric Layer...</button>
        </div>
        <div className="-ml-[10px] flex h-[67px] shrink-0 items-center pt-[15px]">
          <div className="w-[164px] pl-[25px]">Layer</div>
          <div className="w-[102px]">Id</div>
          <div className="w-[250px] text-center">Type</div>
          <div className="w-[344px] text-center">Material</div>
          <div className="w-[242px] text-center">Thickness</div>
          <div className="flex w-[52px] justify-center">
            <LockIcon />
          </div>
          <div className="w-[340px] text-center">Color</div>
        </div>
        <div className="-ml-[10px] shrink-0">
          {layers.map((l) => (
            <Row key={l.id} l={l} />
          ))}
        </div>
        <div className="mt-[24px] flex h-[31px] shrink-0 items-center border-y-[2px] border-[#e1e3e0] bg-[#f9f9f9] pl-[5px]">
          <div className="h-[16px] w-[1215px] rounded-full bg-[#7e7e7e]" />
        </div>
        <div className="flex h-[79px] shrink-0 items-start pt-[17px]">
          <span className="ml-[12px] mt-[3px] w-[368px] shrink-0 whitespace-nowrap">Board thickness from stackup:</span>
          <div className={`${fieldBase} ml-[6px] h-[44px] w-[236px] shrink-0`}>1 mm</div>
          <button className={`${btnBase} ml-[30px] h-[41px] w-[370px] shrink-0`}>Adjust Dielectric Thickness</button>
          <button className={`${btnBase} ml-[184px] h-[41px] w-[276px] shrink-0`}>Export to Clipboard</button>
        </div>
      </div>
    </div>
    <div className="flex h-[85px] shrink-0 items-center justify-between border-t-[3px] border-[#d8dbd7] pb-[2px] pl-[20px] pr-[26px]">
      <button className={`${btnBase} h-[41px] w-[495px]`}>Import Settings from Another Board...</button>
      <div className="flex gap-[25px]">
        <button className={`${btnBase} h-[41px] w-[168px]`}>Cancel</button>
        <button className="flex h-[41px] w-[168px] items-center justify-center rounded-[9px] bg-gradient-to-b from-[#6190f7] to-[#4c77f5] text-white">OK</button>
      </div>
    </div>
  </div>
);

const App: React.FC = () => (
  <div className="relative h-[2098px] w-[2810px] overflow-hidden bg-[#e9e9e9]">
    <Canvas />
    <div className="h-[64px] border-t-[2px] border-[#b5b5b5] bg-[#e9e9e9] text-[22px] text-[#9a9a9a] [font-family:Inter,sans-serif]">
      <div className="-ml-[24px] mt-[1px] h-[30px] leading-[30px]">Segments</div>
      <div className="flex h-[22px] pl-[145px] leading-[26px] text-[#6f6f6f]">
        <span className="w-[110px]">51</span>
        <span>44</span>
      </div>
      <div className="mt-[6px] h-px bg-[#c4c4c4]" />
    </div>
    <BoardSetup />
  </div>
);

export default App;
